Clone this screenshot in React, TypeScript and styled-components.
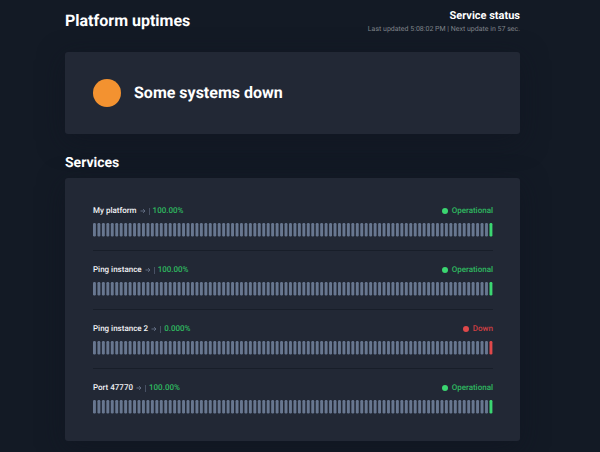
import React from "react";
import styled, { createGlobalStyle } from "styled-components";

const GlobalStyle = createGlobalStyle`
  * { box-sizing: border-box; }
  body {
    margin: 0;
    background: #131a25;
    color: #fff;
    font-family: Roboto, "Liberation Sans", sans-serif;
    text-rendering: geometricPrecision;
  }
`;

const Page = styled.main`
  padding: 8px 80px 11px 65px;
`;

const Header = styled.header`
  display: flex;
  justify-content: space-between;
  align-items: flex-start;
  height: 44px;
`;

const Title = styled.h1`
  margin: 0;
  font-size: 16px;
  line-height: 26px;
  font-weight: 700;
`;

const HeaderStatus = styled.div`
  text-align: right;
`;

const StatusTitle = styled.h2`
  margin: 0;
  font-size: 11px;
  line-height: 16px;
  font-weight: 700;
`;

const Updated = styled.p`
  margin: 0;
  font-size: 7px;
  line-height: 10px;
  color: #7f8389;
`;

const Card = styled.section`
  background: #222835;
  border-radius: 3px;
  padding: 27px 27px 27px 28px;
  box-shadow: 0 7px 27px rgba(16, 20, 32, 0.5);
`;

const Summary = styled(Card)`
  display: flex;
  align-items: center;
  gap: 13px;
`;

const SummaryDot = styled.span`
  width: 28px;
  height: 28px;
  border-radius: 50%;
  background: #f39230;
`;

const SummaryText = styled.h2`
  margin: 0;
  font-size: 16px;
  line-height: 28px;
  font-weight: 700;
`;

const SectionTitle = styled.h2`
  margin: 19px 0 5px;
  font-size: 14px;
  line-height: 20px;
  font-weight: 700;
`;

const ServiceList = styled.ul`
  margin: 0;
  padding: 0;
  list-style: none;
`;

const ServiceItem = styled.li`
  & + & {
    margin-top: 13px;
    padding-top: 13px;
    border-top: 1px solid #181e29;
  }
`;

const ServiceRow = styled.div`
  display: flex;
  justify-content: space-between;
  font-size: 8px;
  line-height: 12px;
  margin-bottom: 6px;
`;

const ServiceLabel = styled.div`
  display: flex;
  align-items: center;
  gap: 3px;
`;

const ServiceLink = styled.a`
  display: flex;
  align-items: center;
  gap: 3px;
  color: #f2f3f5;
  font-weight: 500;
  text-decoration: none;
`;

const Divider = styled.span`
  width: 1px;
  height: 7px;
  background: #485164;
`;

const Tone = styled.span<{ $down?: boolean }>`
  font-weight: 500;
  color: ${(p) => (p.$down ? "#cf3f43" : "#2fb960")};
`;

const State = styled(Tone)`
  display: flex;
  align-items: center;
  gap: 4px;
`;

const StateDot = styled.span<{ $down?: boolean }>`
  width: 6px;
  height: 6px;
  border-radius: 50%;
  background: ${(p) => (p.$down ? "#df484a" : "#3bd671")};
`;

const History = styled.svg`
  display: block;
  width: 100%;
  height: 14px;
`;

const ARROW = (
  <svg width="6" height="6" viewBox="0 0 6 6" fill="none" stroke="#657087" strokeWidth="0.9" aria-hidden="true">
    <path d="M0.5 3H5M3.1 1.1L5 3L3.1 4.9" />
  </svg>
);

const DAYS = 90;

const SERVICES = [
  { name: "My platform", uptime: "100.00%", down: false },
  { name: "Ping instance", uptime: "100.00%", down: false },
  { name: "Ping instance 2", uptime: "0.000%", down: true },
  { name: "Port 47770", uptime: "100.00%", down: false },
];

function UptimeHistory({ down }: { down: boolean }) {
  return (
    <History viewBox="0 0 400 14" preserveAspectRatio="none" role="img" aria-label="Uptime for the last 90 days">
      {Array.from({ length: DAYS }, (_, i) => (
        <rect
          key={i}
          x={i * 4.455}
          y="0"
          width="2.9"
          height="13.5"
          rx="1.2"
          fill={i < DAYS - 1 ? "#687790" : down ? "#df484a" : "#3bd671"}
        />
      ))}
    </History>
  );
}

export default function App() {
  return (
    <>
      <GlobalStyle />
      <Page>
        <Header>
          <Title>Platform uptimes</Title>
          <HeaderStatus>
            <StatusTitle>Service status</StatusTitle>
            <Updated>Last updated 5:08:02 PM | Next update in 57 sec.</Updated>
          </HeaderStatus>
        </Header>
        <Summary>
          <SummaryDot />
          <SummaryText>Some systems down</SummaryText>
        </Summary>
        <SectionTitle>Services</SectionTitle>
        <Card>
          <ServiceList>
            {SERVICES.map((s) => (
              <ServiceItem key={s.name}>
                <ServiceRow>
                  <ServiceLabel>
                    <ServiceLink href="#">
                      {s.name}
                      {ARROW}
                    </ServiceLink>
                    <Divider />
                    <Tone>{s.uptime}</Tone>
                  </ServiceLabel>
                  <State $down={s.down}>
                    <StateDot $down={s.down} />
                    {s.down ? "Down" : "Operational"}
                  </State>
                </ServiceRow>
                <UptimeHistory down={s.down} />
              </ServiceItem>
            ))}
          </ServiceList>
        </Card>
      </Page>
    </>
  );
}
